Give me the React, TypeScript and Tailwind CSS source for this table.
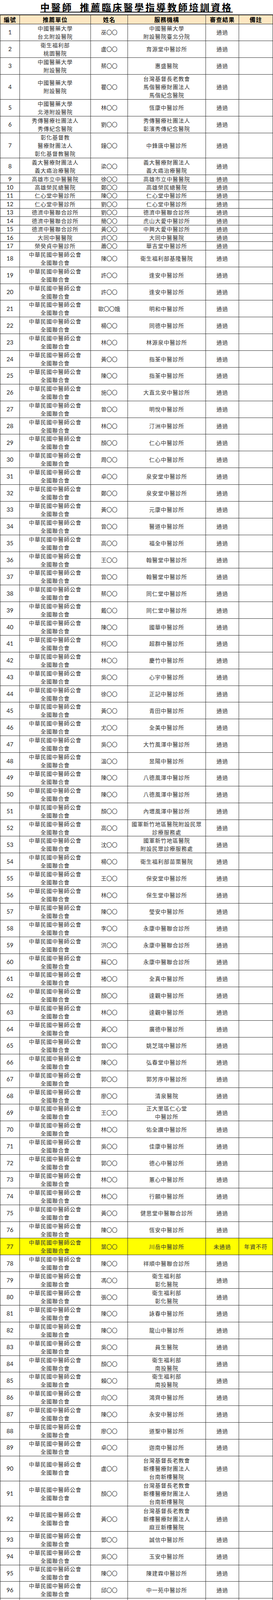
const ORG = '中華民國中醫師公會/全國聯合會'

// 編號 1-17：推薦單位各不相同
const first: [string, string, string][] = [
  ['中國醫藥大學/台北附設醫院', '巫', '中國醫藥大學/附設醫院臺北分院'],
  ['衛生福利部/桃園醫院', '盧', '育源堂中醫診所'],
  ['中國醫藥大學/附設醫院', '蔡', '惠盛醫院'],
  ['中國醫藥大學/附設醫院', '瞿', '台灣基督長老教會/馬偕醫療財團法人/馬偕紀念醫院'],
  ['中國醫藥大學/北港附設醫院', '林', '恆康中醫診所'],
  ['秀傳醫療社團法人/秀傳紀念醫院', '劉', '秀傳醫療社團法人/彰濱秀傳紀念醫院'],
  ['彰化基督教/醫療財團法人/彰化基督教醫院', '鐘', '中鋒唐中醫診所'],
  ['義大醫療財團法人/義大癌治療醫院', '梁', '義大醫療財團法人/義大癌治療醫院'],
  ['高雄市立中醫醫院', '徐', '高雄市立中醫醫院'],
  ['高雄榮民總醫院', '鄭', '高雄榮民總醫院'],
  ['仁心堂中醫診所', '陳', '仁心堂中醫診所'],
  ['仁心堂中醫診所', '劉', '仁心堂中醫診所'],
  ['德濟中醫聯合診所', '劉', '德濟中醫聯合診所'],
  ['德濟中醫聯合診所', '簡', '虎山大愛中醫診所'],
  ['德濟中醫聯合診所', '黃', '中興大愛中醫診所'],
  ['大同中醫醫院', '許', '大同中醫醫院'],
  ['榮癸貞中醫診所', '蕭', '華吉堂中醫診所'],
]

// 編號 18 起：全國聯合會推薦（姓:服務機構[:結果:備註]）
const rest = `陳:衛生福利部基隆醫院
許:逢安中醫診所
許:逢安中醫診所
歐〇〇娥:明和中醫診所
楊:同德中醫診所
林:林源泉中醫診所
黃:指荃中醫診所
陳:指荃中醫診所
施:大直北安中醫診所
曾:明悅中醫診所
林:汀洲中醫診所
顏:仁心中醫診所
周:仁心中醫診所
卓:泉安堂中醫診所
鄭:泉安堂中醫診所
黃:元康中醫診所
曾:醫道中醫診所
高:福全中醫診所
王:翰醫堂中醫診所
曾:翰醫堂中醫診所
蔡:同仁堂中醫診所
戴:同仁堂中醫診所
陳:國華中醫診所
柯:超群中醫診所
林:慶竹中醫診所
吳:心宇中醫診所
徐:正記中醫診所
黃:青田中醫診所
尤:全美中醫診所
吳:大竹風澤中醫診所
溫:昱陽中醫診所
陳:八德風澤中醫診所
陳:八德風澤中醫診所
顏:內壢風澤中醫診所
高:國軍新竹地區醫院附設民眾/診療服務處
沈:國軍新竹地區醫院/附設民眾診療服務處
楊:衛生福利部苗栗醫院
王:保安堂中醫診所
林:保生堂中醫診所
陳:瑩安中醫診所
李:永康中醫聯合診所
洪:永康中醫聯合診所
蘇:永康中醫聯合診所
褚:全真中醫診所
顏:達觀中醫診所
林:達觀中醫診所
黃:廣德中醫診所
曾:姚芝瑞中醫診所
陳:弘春堂中醫診所
郭:郭芳序中醫診所
廖:清泉醫院
王:正大里區仁心堂/中醫診所
林:佑全讚中醫診所
吳:佳康中醫診所
郭:德心中醫診所
林:蕙心中醫診所
林:行願中醫診所
黃:健思堂中醫聯合診所
陳:恆安中醫診所
葉:川岳中醫診所:未通過:年資不符
陳:祥順中醫聯合診所
馮:衛生福利部/彰化醫院
張:衛生福利部/彰化醫院
陳:詠春中醫診所
陳:龍山中醫診所
吳:員生醫院
顏:衛生福利部/南投醫院
賴:衛生福利部/南投醫院
向:鴻齊中醫診所
陳:永安中醫診所
廖:道聖中醫診所
卓:迦南中醫診所
盧:台灣基督長老教會/新樓醫療財團法人/台南新樓醫院
顏:台灣基督長老教會/新樓醫療財團法人/台南新樓醫院
黃:台灣基督長老教會/新樓醫療財團法人/麻豆新樓醫院
鄧:誠信中醫診所
吳:玉安中醫診所
陳:陳建霖中醫診所
邱:中一苑中醫診所
洪:崇益中醫診所
楊:福濟中醫診所
周:福濟中醫診所
吳:黃蘭媖中醫診所
邱:華夏名医中醫診所
陳:華夏名医中醫診所
林:華夏名医中醫診所
陳:吳博雄中醫診所
李:健仁醫院
陳:健仁醫院
李:雲玫中醫診所
羅:牧水中醫診所
林:三民承德中醫診所
楊:明医中醫診所
孫:明医中醫診所
徐:明医中醫診所
王:明医中醫診所
陳:太丞醫家中醫診所
許:太丞醫家中醫診所
洪:太丞醫家中醫診所
呂:太丞醫家中醫診所
楊:太丞醫家中醫診所
林:仁安中醫診所
陳:羅東仁濟中醫/聯合診所
陳:羅東仁濟中醫/聯合診所
張:羅東仁濟中醫/聯合診所
劉:仁濟中醫聯合診所
林:仁濟中醫聯合診所
陳:仁濟中醫聯合診所
林:新悅中醫診所
蔡:新悅中醫診所
唐:仁濟中醫診所
呂:大正中醫診所
梁:衛生福利部花蓮醫院
謝:玉麗中醫診所
姚:卓家老舖中醫診所`

type Row = { org: string; name: string; place: string; result: string; note: string }

const rows: Row[] = [
  ...first.map(([org, name, place]) => ({ org, name, place, result: '通過', note: '' })),
  ...rest
    .trim()
    .split('\n')
    .map((line) => {
      const [name, place, result, note] = line.trim().split(':')
      return { org: ORG, name, place, result: result ?? '通過', note: note ?? '' }
    }),
]

// 每行文字約 21.44px，列高依行數計算
const LINE = 21.44

const cjk = { fontFamily: '"Noto Sans CJK TC", "Noto Sans CJK SC", sans-serif' }

const headers = ['編號', '推薦單位', '姓名', '服務機構', '審查結果', '備註']

function Lines({ text }: { text: string }) {
  return (
    <>
      {text.split('/').map((t, i) => (
        <span key={i} className="block h-[21px] whitespace-nowrap leading-[21px]">
          {t}
        </span>
      ))}
    </>
  )
}

const cell =
  'flex min-h-0 flex-col items-center justify-center overflow-hidden border-r border-[#2a2a2a] text-center'

export default function App() {
  return (
    <div className="w-[700px] bg-white text-[#333]" style={cjk}>
      <div className="flex h-[37px] items-start justify-center overflow-hidden pt-[3px]">
        <h1 className="text-[24px] font-bold leading-[30px] tracking-[4px] text-black underline decoration-[1.5px] underline-offset-[2px]">
          中醫師_推薦臨床醫學指導教師培訓資格
        </h1>
      </div>

      <div className="grid h-[25px] grid-cols-[51px_182px_95px_200px_85px_87px] overflow-hidden border-t-2 border-b border-[#1a1a1a] bg-[#fde7c2] text-[15px] font-bold leading-[20px] tracking-[1px] text-black">
        {headers.map((h, i) => (
          <div key={h} className={`${cell} ${i === 0 ? 'border-l' : ''}`}>
            {h}
          </div>
        ))}
      </div>

      {rows.map((r, i) => {
        const n = Math.max(r.org.split('/').length, r.place.split('/').length)
        const failed = r.result !== '通過'
        return (
          <div
            key={i}
            style={{ height: n * LINE }}
            className={`grid grid-cols-[51px_182px_95px_200px_85px_87px] grid-rows-[100%] overflow-hidden border-b border-[#2a2a2a] text-[14px] leading-[21px] tracking-[1px] ${failed ? 'bg-[#ffff00]' : ''}`}
          >
            <div
              className={`${cell} border-l text-[15px] tracking-normal text-[#222]`}
              style={{ fontFamily: 'Lato, "Liberation Sans", sans-serif' }}
            >
              {i + 1}
            </div>
            <div className={cell}>
              <Lines text={r.org} />
            </div>
            <div className={`${cell} tracking-normal`}>
              {r.name.includes('〇') ? r.name : `${r.name}〇〇`}
            </div>
            <div className={cell}>
              <Lines text={r.place} />
            </div>
            <div className={cell}>{r.result}</div>
            <div className={cell}>{r.note}</div>
          </div>
        )
      })}
    </div>
  )
}
